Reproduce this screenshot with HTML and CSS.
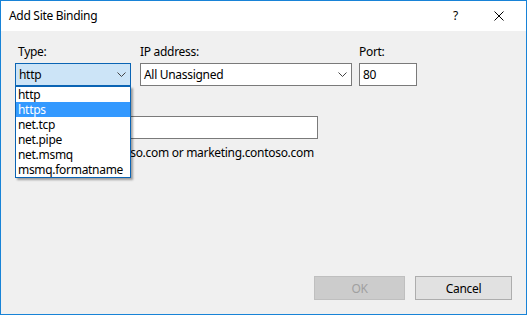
FILE: index.html
```html
<!DOCTYPE html>
<html lang="en">
<head>
  <meta charset="UTF-8">
  <title>Add Site Binding</title>
  <link rel="stylesheet" href="styles.css">
</head>
<body>
  <div class="window">
    <div class="titlebar">
      <span class="title">Add Site Binding</span>
      <span class="help">?</span>
      <svg class="close" width="10" height="10" viewBox="0 0 10 10">
        <path d="M0.5 0.5 L9.5 9.5 M9.5 0.5 L0.5 9.5" stroke="#000" stroke-width="1" fill="none"/>
      </svg>
    </div>
    <div class="content">
      <div class="row">
        <div class="field type">
          <label class="lbl">Type:</label>
          <div class="combo focused">
            <span>http</span>
            <svg class="chev" width="9" height="5" viewBox="0 0 9 5"><path d="M0.5 0.5 L4.5 4.5 L8.5 0.5" stroke="#444" fill="none"/></svg>
          </div>
        </div>
        <div class="field ip">
          <label class="lbl">IP address:</label>
          <div class="combo">
            <span>All Unassigned</span>
            <svg class="chev" width="9" height="5" viewBox="0 0 9 5"><path d="M0.5 0.5 L4.5 4.5 L8.5 0.5" stroke="#444" fill="none"/></svg>
          </div>
        </div>
        <div class="field port">
          <label class="lbl">Port:</label>
          <div class="textbox">80</div>
        </div>
      </div>

      <label class="lbl host-lbl">Host name:</label>
      <div class="textbox host"></div>
      <div class="example">Example: www.contoso.com or marketing.contoso.com</div>

      <ul class="droplist">
        <li>http</li>
        <li class="sel">https</li>
        <li>net.tcp</li>
        <li>net.pipe</li>
        <li>net.msmq</li>
        <li>msmq.formatname</li>
      </ul>

      <div class="buttons">
        <button class="btn ok" disabled>OK</button>
        <button class="btn cancel">Cancel</button>
      </div>
    </div>
  </div>
</body>
</html>
```

FILE: styles.css
```css
body {
  margin: 0;
  font-family: "Noto Sans", "Open Sans", sans-serif;
  font-size: 12px;
  letter-spacing: -0.3px;
  color: #000;
}
.window {
  width: 527px;
  height: 315px;
  box-sizing: border-box;
  border: 1px solid #1883d7;
  display: flex;
  flex-direction: column;
}
.titlebar {
  height: 30px;
  background: #fff;
  display: flex;
  align-items: center;
  padding-left: 8px;
}
.title {
  flex: 1;
  padding-bottom: 2px;
}
.help {
  margin-right: 36px;
  padding-bottom: 2px;
}
.close {
  margin-right: 22px;
  margin-bottom: 1px;
}
.content {
  flex: 1;
  background: #f0f0f0;
  position: relative;
  display: flex;
  flex-direction: column;
  padding: 13px 14px 14px 14px;
}
.row {
  display: flex;
}
.lbl {
  display: block;
  line-height: 16px;
  height: 16px;
  margin-bottom: 3px;
}
.type { width: 116px; margin-right: 9px; }
.type .lbl { padding-left: 3px; }
.ip { width: 212px; margin-right: 7px; }
.port { width: 58px; }
.combo, .textbox {
  box-sizing: border-box;
  height: 23px;
  border: 1px solid #7a7a7a;
  background: #fff;
  display: flex;
  align-items: center;
  padding-left: 3px;
}
.combo span { flex: 1; }
.combo.focused {
  background: #cce4f7;
  border-color: #0a64b4;
}
.chev {
  margin-right: 4px;
}
.host-lbl {
  margin-top: 11px;
}
.host {
  width: 303px;
}
.example {
  margin-top: 6px;
  padding-left: 3px;
  line-height: 16px;
}
.droplist {
  position: absolute;
  left: 14px;
  top: 55px;
  width: 116px;
  box-sizing: border-box;
  margin: 0;
  padding: 0;
  list-style: none;
  background: #fff;
  border: 1px solid #0a64b4;
  box-shadow: 2px 2px 2px rgba(0, 0, 0, 0.35);
}
.droplist li {
  height: 15px;
  line-height: 15px;
  padding-left: 2px;
}
.droplist li.sel {
  background: #3399ff;
  color: #fff;
}
.buttons {
  margin-top: auto;
  display: flex;
  justify-content: flex-end;
}
.btn {
  height: 24px;
  font-family: inherit;
  font-size: 12px;
  letter-spacing: inherit;
  border: 1px solid #adadad;
  background: #e1e1e1;
  color: #000;
  padding: 0;
}
.ok {
  width: 91px;
  margin-right: 10px;
  background: #cccccc;
  border-color: #bfbfbf;
  color: #a0a0a0;
}
.cancel {
  width: 97px;
}
```
